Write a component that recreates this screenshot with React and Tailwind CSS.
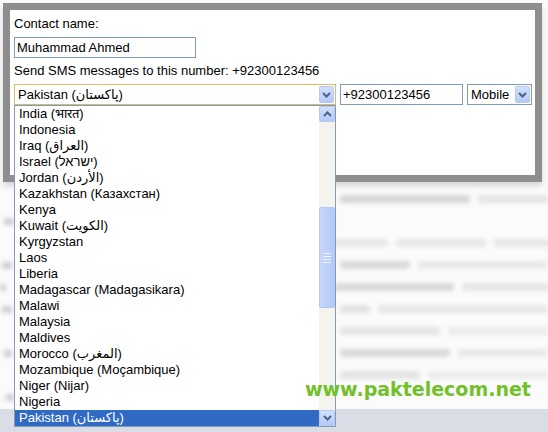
import React from 'react';

const font = { fontFamily: '"Liberation Sans", "DejaVu Sans", Arial, sans-serif' };

const countries = [
  'India (भारत)',
  'Indonesia',
  'Iraq (العراق)',
  'Israel (ישראל)',
  'Jordan (الأردن)',
  'Kazakhstan (Казахстан)',
  'Kenya',
  'Kuwait (الكويت)',
  'Kyrgyzstan',
  'Laos',
  'Liberia',
  'Madagascar (Madagasikara)',
  'Malawi',
  'Malaysia',
  'Maldives',
  'Morocco (المغرب)',
  'Mozambique (Moçambique)',
  'Niger (Nijar)',
  'Nigeria',
  'Pakistan (پاکستان)',
];

// blurred page behind the dialog, drawn as soft grey strokes
const pageRows = [
  { left: 0, parts: [[130, '#d6d6d6'], [70, '#e4e4e4']] },
  { left: 10, parts: [] },
  { left: 0, parts: [[60, '#e6e6e6'], [90, '#e6e6e6'], [60, '#e6e6e6']] },
  { left: 10, parts: [[70, '#d9d9d9'], [130, '#e8e8e8']] },
  { left: 6, parts: [[120, '#d9d9d9'], [90, '#e6e6e6']] },
  { left: 10, parts: [[30, '#e2e2e2'], [170, '#e8e8e8']] },
  { left: 0, parts: [[100, '#e4e4e4'], [100, '#ebebeb']] },
  { left: 8, parts: [[110, '#d9d9d9'], [90, '#e8e8e8']] },
  { left: 0, parts: [[80, '#e2e2e2'], [120, '#ebebeb']] },
  { left: 8, parts: [] },
];

const XpArrow = ({ up = false, className = '' }) => (
  <div
    className={`flex items-center justify-center bg-gradient-to-b from-[#d3e0fd] to-[#b5c9f7] border border-[#b6c9f3] rounded-[2px] ${className}`}
  >
    <svg width="9" height="6" viewBox="0 0 9 6">
      <path
        d={up ? 'M1 5 L4.5 1.5 L8 5' : 'M1 1 L4.5 4.5 L8 1'}
        fill="none"
        stroke="#4d6185"
        strokeWidth="2"
      />
    </svg>
  </div>
);

const App = () => {
  return (
    <div className="relative w-[548px] h-[432px] overflow-hidden bg-[#fbfbfb] text-[13px] text-black" style={font}>
      {/* Background page */}
      <div className="flex flex-col pt-[188px] blur-[2px]">
        {pageRows.map((row, i) => (
          <div key={i} className="flex h-[22px] items-center">
            <div className="flex w-[14px] justify-end">
              {row.left > 0 && <div className="h-[7px] bg-[#cfcfcf]" style={{ width: row.left }} />}
            </div>
            <div className="ml-[328px] flex gap-[8px]">
              {row.parts.map(([w, c], j) => (
                <div key={j} className="h-[8px] rounded-[2px]" style={{ width: w, background: c }} />
              ))}
            </div>
          </div>
        ))}
      </div>
      <div className="absolute left-0 right-0 bottom-0 h-[23px] bg-[#dadde5]" />

      {/* Dialog */}
      <div className="absolute left-[3px] top-[3px] w-[539px] h-[179px] border-[7px] border-[#8e8e8e] bg-white shadow-[0_4px_6px_rgba(0,0,0,0.15)]">
        <div className="flex flex-col pl-[4px] pt-[6px]">
          <div className="h-[16px] leading-[16px]">Contact name:</div>
          <div className="mt-[5px] w-[182px] h-[21px] border border-[#7f9db9] px-[2px] leading-[19px]">Muhammad Ahmed</div>
          <div className="mt-[5px] h-[16px] leading-[16px]">Send SMS messages to this number: +92300123456</div>
          <div className="mt-[5px] flex gap-[4px]">
            <div className="flex w-[322px] h-[21px] items-center justify-between border border-[#d9bb6b] pl-[3px] pr-[1px]">
              <span>Pakistan (پاکستان)</span>
              <XpArrow className="w-[15px] h-[17px]" />
            </div>
            <div className="w-[123px] h-[21px] border border-[#7f9db9] px-[2px] leading-[19px]">+92300123456</div>
            <div className="flex w-[65px] h-[21px] items-center justify-between border border-[#7f9db9] pl-[3px] pr-[1px]">
              <span>Mobile</span>
              <XpArrow className="w-[15px] h-[17px]" />
            </div>
          </div>
        </div>
      </div>

      {/* Open dropdown list */}
      <div className="absolute left-[14px] top-[105px] w-[322px] h-[322px] flex border border-[#7f9db9] bg-white">
        <div className="flex flex-1 flex-col">
          {countries.map((c, i) => (
            <div
              key={c}
              className={`h-[16px] leading-[16px] pl-[4px] whitespace-nowrap ${i === countries.length - 1 ? 'bg-[#316ac5] text-white' : ''}`}
            >
              {c}
            </div>
          ))}
        </div>
        <div className="flex w-[16px] flex-col bg-[#f4f3ee]">
          <XpArrow up className="h-[16px]" />
          <div className="h-[85px]" />
          <div className="flex h-[101px] flex-col items-center justify-center gap-[2px] rounded-[2px] border border-[#b6c9f3] bg-gradient-to-r from-[#c6d6fb] to-[#b5c9f7]">
            <div className="w-[8px] h-[1px] bg-[#eef3fe]" />
            <div className="w-[8px] h-[1px] bg-[#eef3fe]" />
            <div className="w-[8px] h-[1px] bg-[#eef3fe]" />
            <div className="w-[8px] h-[1px] bg-[#eef3fe]" />
          </div>
          <div className="flex-1" />
          <XpArrow className="h-[16px]" />
        </div>
      </div>

      {/* Watermark */}
      <div
        className="absolute left-[305px] top-[378px] text-[19px] font-bold text-[#72c02a] leading-[22px]"
        style={{ fontFamily: '"DejaVu Sans", Verdana, sans-serif' }}
      >
        www.paktelecom.net
      </div>
    </div>
  );
};

export default App;
